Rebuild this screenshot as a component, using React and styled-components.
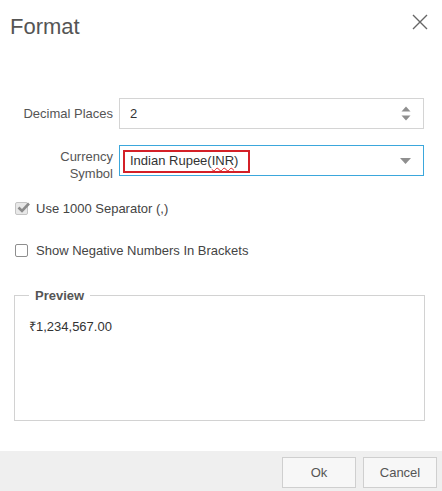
import React from "react";
import { styled, createGlobalStyle } from "styled-components";

const GlobalStyle = createGlobalStyle`
  html, body {
    margin: 0;
    padding: 0;
    background: #fff;
  }
  body {
    font-family: "Liberation Sans", Arial, sans-serif;
  }
`;

function SpinArrows() {
  return (
    <svg width="10" height="15" viewBox="0 0 10 15">
      <path d="M0.5 5.5 L5 0.5 L9.5 5.5 Z" fill="#8f8f8f" />
      <path d="M0.5 9.5 L5 14.5 L9.5 9.5 Z" fill="#8f8f8f" />
    </svg>
  );
}

function DropArrow() {
  return (
    <svg width="11" height="6" viewBox="0 0 11 6">
      <path d="M0 0 L5.5 6 L11 0 Z" fill="#8f8f8f" />
    </svg>
  );
}

function CloseIcon() {
  return (
    <svg width="16" height="16" viewBox="0 0 16 16">
      <path d="M1 1 L15 15 M15 1 L1 15" stroke="#666" strokeWidth="1.4" />
    </svg>
  );
}

function App() {
  return (
    <>
      <GlobalStyle />
      <Dialog>
        <Header>
          <Title>Format</Title>
          <CloseButton>
            <CloseIcon />
          </CloseButton>
        </Header>

        <Body>
          <FieldRow>
            <Label>Decimal Places</Label>
            <Input>
              <Value>2</Value>
              <SpinArrows />
            </Input>
          </FieldRow>

          <FieldRow $top>
            <Label $pad={3}>
              Currency
              <br />
              Symbol
            </Label>
            <Input $focused>
              <Value>
                Indian Rupee(<Spell>INR</Spell>)
              </Value>
              <DropArrow />
              <Highlight />
            </Input>
          </FieldRow>

          <CheckRow $top={19}>
            <Box $checked>
              <svg width="13" height="11" viewBox="0 0 13 11">
                <path d="M1.5 5.5 L5 9 L12 1.5" stroke="#8c8c8c" strokeWidth="2.6" fill="none" />
              </svg>
            </Box>
            <CheckText>Use 1000 Separator (,)</CheckText>
          </CheckRow>

          <CheckRow $top={27}>
            <Box />
            <CheckText>Show Negative Numbers In Brackets</CheckText>
          </CheckRow>

          <Preview>
            <Legend>Preview</Legend>
            <PreviewText>₹1,234,567.00</PreviewText>
          </Preview>
        </Body>

        <Footer>
          <Button>Ok</Button>
          <Button>Cancel</Button>
        </Footer>
      </Dialog>
    </>
  );
}

export default App;

const Dialog = styled.div`
  width: 442px;
  height: 491px;
  display: flex;
  flex-direction: column;
  background: #fff;
  overflow: hidden;
`;

const Header = styled.div`
  height: 52px;
  display: flex;
  align-items: flex-start;
  justify-content: space-between;
  padding: 0 14px 0 10px;
`;

const Title = styled.div`
  margin-top: 14px;
  font-size: 22px;
  color: #555;
`;

const CloseButton = styled.div`
  margin-top: 14px;
  width: 16px;
  height: 16px;
`;

const Body = styled.div`
  flex: 1;
  display: flex;
  flex-direction: column;
  padding: 46px 18px 0 14px;
`;

const FieldRow = styled.div`
  display: flex;
  align-items: ${(p) => (p.$top ? "flex-start" : "center")};

  & + & {
    margin-top: 16px;
  }
`;

const Label = styled.div`
  width: 99px;
  padding-right: 6px;
  padding-top: ${(p) => p.$pad || 0}px;
  text-align: right;
  font-size: 13px;
  line-height: 17px;
  color: #555;
`;

const Input = styled.div`
  position: relative;
  box-sizing: border-box;
  width: 305px;
  height: 31px;
  display: flex;
  align-items: center;
  justify-content: space-between;
  padding: 0 12px 0 10px;
  border: 1px solid ${(p) => (p.$focused ? "#3ba7dc" : "#d4d4d4")};
  background: #fff;
`;

const Value = styled.div`
  font-size: 13px;
  color: #333;
`;

const Spell = styled.span`
  text-decoration: underline wavy #e02020;
  text-decoration-thickness: 1px;
  text-underline-offset: 2px;
`;

const Highlight = styled.div`
  position: absolute;
  left: 3px;
  top: 4px;
  width: 127px;
  height: 23px;
  box-sizing: border-box;
  border: 2px solid #d42027;
  pointer-events: none;
`;

const CheckRow = styled.div`
  display: flex;
  align-items: center;
  margin-top: ${(p) => p.$top}px;
  margin-left: 1px;
  gap: 8px;
`;

const Box = styled.div`
  position: relative;
  box-sizing: border-box;
  width: 13px;
  height: 13px;
  border: 1px solid ${(p) => (p.$checked ? "#c4c4c4" : "#8e8e8e")};
  border-radius: 2px;
  background: ${(p) => (p.$checked ? "#e8e8e8" : "#fff")};

  svg {
    position: absolute;
    left: 1px;
    top: -1px;
  }
`;

const CheckText = styled.div`
  font-size: 13px;
  color: #444;
`;

const Preview = styled.fieldset`
  margin: 30px 0 0 0;
  padding: 14px 14px 0 14px;
  width: 411px;
  height: 133px;
  box-sizing: border-box;
  border: 1px solid #d2d2d2;
  min-width: 0;
`;

const Legend = styled.legend`
  margin-left: 0;
  padding: 0 6px;
  font-size: 13px;
  font-weight: bold;
  color: #555;
`;

const PreviewText = styled.div`
  font-size: 13px;
  color: #333;
`;

const Footer = styled.div`
  height: 40px;
  background: #efefef;
  display: flex;
  justify-content: flex-end;
  align-items: flex-start;
  gap: 7px;
  padding: 6px 5px 0 0;
  box-sizing: border-box;
`;

const Button = styled.div`
  box-sizing: border-box;
  width: 74px;
  height: 31px;
  display: flex;
  align-items: center;
  justify-content: center;
  border: 1px solid #cfcfcf;
  background: #f7f7f7;
  font-size: 13px;
  color: #555;
`;
